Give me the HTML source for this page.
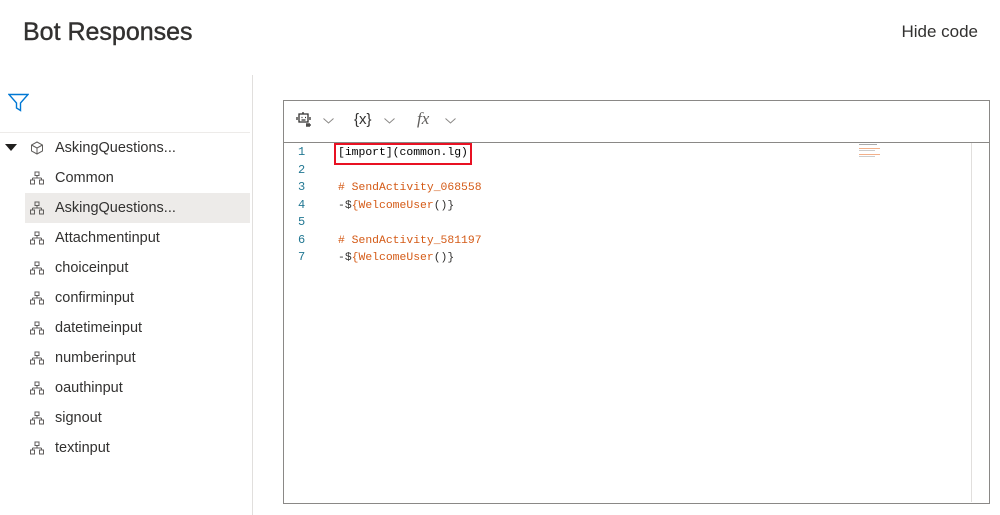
<!DOCTYPE html>
<html><head><style>
body{margin:0;width:1000px;height:515px;background:#fff;font-family:"Liberation Sans",sans-serif;color:#323130;position:relative;overflow:hidden}
.a{position:absolute}
.t{font-size:25px;left:23px;top:18px;font-weight:normal;color:#323130;-webkit-text-stroke:0.4px #323130}
.hc{right:22px;top:22px;font-size:17px}
.it{position:absolute;left:25px;width:225px;height:30px;font-size:14.5px;line-height:30px}
.it span{position:absolute;left:30px}
.it svg{position:absolute;left:5px;top:8px}
.ln{position:absolute;left:298px;color:#237893;font-family:"Liberation Mono",monospace;font-size:12px}
.cl{position:absolute;left:338px;font-family:"Liberation Mono",monospace;font-size:11.4px;white-space:pre;margin-top:2px}
.o{color:#d45a16}
</style></head><body>
<div class="a t">Bot Responses</div>
<div class="a hc">Hide code</div>
<div class="a" style="left:252px;top:75px;width:1px;height:440px;background:#e1dfdd"></div>
<svg class="a" style="left:8px;top:93px" width="21" height="19" viewBox="0 0 21 19"><path d="M1 1.5H20L12.5 10V17.5L8.5 15V10Z" fill="none" stroke="#0078d4" stroke-width="1.4"/></svg>
<div class="a" style="left:0;top:132px;width:250px;height:1px;background:#edebe9"></div>
<svg class="a" style="left:5px;top:144px" width="12" height="8"><path d="M0 0H12L6 7Z" fill="#201f1e"/></svg>
<div class="it" style="top:133px"><svg width="14" height="14" viewBox="0 0 14 14"><path d="M7 1L12.5 4V10L7 13L1.5 10V4Z M1.5 4L7 7L12.5 4 M7 7V13" fill="none" stroke="#605e5c" stroke-width="1"/></svg><span>AskingQuestions...</span></div>
<div class="it" style="top:163px"><svg width="14" height="14" viewBox="0 0 14 14"><path d="M5 1h4v3.5H5z M7 4.5V7 M2.5 7h9 M2.5 7v2 M11.5 7v2 M0.5 9h4v4h-4z M9.5 9h4v4h-4z" fill="none" stroke="#605e5c"/></svg><span>Common</span></div>
<div class="it" style="top:193px;background:#edebe9"><svg width="14" height="14" viewBox="0 0 14 14"><path d="M5 1h4v3.5H5z M7 4.5V7 M2.5 7h9 M2.5 7v2 M11.5 7v2 M0.5 9h4v4h-4z M9.5 9h4v4h-4z" fill="none" stroke="#605e5c"/></svg><span>AskingQuestions...</span></div>
<div class="it" style="top:223px"><svg width="14" height="14" viewBox="0 0 14 14"><path d="M5 1h4v3.5H5z M7 4.5V7 M2.5 7h9 M2.5 7v2 M11.5 7v2 M0.5 9h4v4h-4z M9.5 9h4v4h-4z" fill="none" stroke="#605e5c"/></svg><span>Attachmentinput</span></div>
<div class="it" style="top:253px"><svg width="14" height="14" viewBox="0 0 14 14"><path d="M5 1h4v3.5H5z M7 4.5V7 M2.5 7h9 M2.5 7v2 M11.5 7v2 M0.5 9h4v4h-4z M9.5 9h4v4h-4z" fill="none" stroke="#605e5c"/></svg><span>choiceinput</span></div>
<div class="it" style="top:283px"><svg width="14" height="14" viewBox="0 0 14 14"><path d="M5 1h4v3.5H5z M7 4.5V7 M2.5 7h9 M2.5 7v2 M11.5 7v2 M0.5 9h4v4h-4z M9.5 9h4v4h-4z" fill="none" stroke="#605e5c"/></svg><span>confirminput</span></div>
<div class="it" style="top:313px"><svg width="14" height="14" viewBox="0 0 14 14"><path d="M5 1h4v3.5H5z M7 4.5V7 M2.5 7h9 M2.5 7v2 M11.5 7v2 M0.5 9h4v4h-4z M9.5 9h4v4h-4z" fill="none" stroke="#605e5c"/></svg><span>datetimeinput</span></div>
<div class="it" style="top:343px"><svg width="14" height="14" viewBox="0 0 14 14"><path d="M5 1h4v3.5H5z M7 4.5V7 M2.5 7h9 M2.5 7v2 M11.5 7v2 M0.5 9h4v4h-4z M9.5 9h4v4h-4z" fill="none" stroke="#605e5c"/></svg><span>numberinput</span></div>
<div class="it" style="top:373px"><svg width="14" height="14" viewBox="0 0 14 14"><path d="M5 1h4v3.5H5z M7 4.5V7 M2.5 7h9 M2.5 7v2 M11.5 7v2 M0.5 9h4v4h-4z M9.5 9h4v4h-4z" fill="none" stroke="#605e5c"/></svg><span>oauthinput</span></div>
<div class="it" style="top:403px"><svg width="14" height="14" viewBox="0 0 14 14"><path d="M5 1h4v3.5H5z M7 4.5V7 M2.5 7h9 M2.5 7v2 M11.5 7v2 M0.5 9h4v4h-4z M9.5 9h4v4h-4z" fill="none" stroke="#605e5c"/></svg><span>signout</span></div>
<div class="it" style="top:433px"><svg width="14" height="14" viewBox="0 0 14 14"><path d="M5 1h4v3.5H5z M7 4.5V7 M2.5 7h9 M2.5 7v2 M11.5 7v2 M0.5 9h4v4h-4z M9.5 9h4v4h-4z" fill="none" stroke="#605e5c"/></svg><span>textinput</span></div>

<div class="a" style="left:283px;top:100px;width:705px;height:402px;border:1px solid #8a8886"></div>
<div class="a" style="left:284px;top:142px;width:705px;height:1px;background:#8a8886"></div>
<div class="a" style="left:971px;top:143px;width:1px;height:359px;background:#e1dfdd"></div>
<svg class="a" style="left:296px;top:111px" width="16" height="18" viewBox="0 0 16 18"><path d="M7 1v2 M3 3h9v8H3z M5.5 6.5h1 M9 6.5h1 M5.5 9h4 M1 6v3 M14 6v3 M11 12v4 M13 12v4 M10 14h5" fill="none" stroke="#323130" stroke-width="1.3"/></svg>
<svg class="a" style="left:323px;top:118px" width="11" height="6"><path d="M0.5 0.5L5.5 5L10.5 0.5" fill="none" stroke="#8a8886"/></svg>
<div class="a" style="left:354px;top:111px;font-size:15px;color:#323130">{x}</div>
<svg class="a" style="left:384px;top:118px" width="11" height="6"><path d="M0.5 0.5L5.5 5L10.5 0.5" fill="none" stroke="#8a8886"/></svg>
<div class="a" style="left:417px;top:109px;font-size:17px;font-style:italic;font-family:'Liberation Serif',serif;color:#605e5c">fx</div>
<svg class="a" style="left:445px;top:118px" width="11" height="6"><path d="M0.5 0.5L5.5 5L10.5 0.5" fill="none" stroke="#8a8886"/></svg>

<div class="ln" style="top:145px">1</div>
<div class="ln" style="top:163px">2</div>
<div class="ln" style="top:180px">3</div>
<div class="ln" style="top:198px">4</div>
<div class="ln" style="top:215px">5</div>
<div class="ln" style="top:233px">6</div>
<div class="ln" style="top:250px">7</div>
<div class="a" style="left:334px;top:143px;width:134px;height:18px;border:2px solid #e81123"></div>
<div class="cl" style="top:145px;color:#000">[import](common.lg)</div>
<div class="cl o" style="top:180px"># SendActivity_068558</div>
<div class="cl" style="top:198px">-$<span class="o">{WelcomeUser</span>()}</div>
<div class="cl o" style="top:233px"># SendActivity_581197</div>
<div class="cl" style="top:250px">-$<span class="o">{WelcomeUser</span>()}</div>
<div class="a" style="left:859px;top:144px;width:18px;height:1px;background:#aaa"></div>
<div class="a" style="left:859px;top:148px;width:21px;height:1px;background:#f3b08a"></div>
<div class="a" style="left:859px;top:150px;width:16px;height:1px;background:#ccc"></div>
<div class="a" style="left:859px;top:154px;width:21px;height:1px;background:#f3b08a"></div>
<div class="a" style="left:859px;top:156px;width:16px;height:1px;background:#ccc"></div>
</body></html>
